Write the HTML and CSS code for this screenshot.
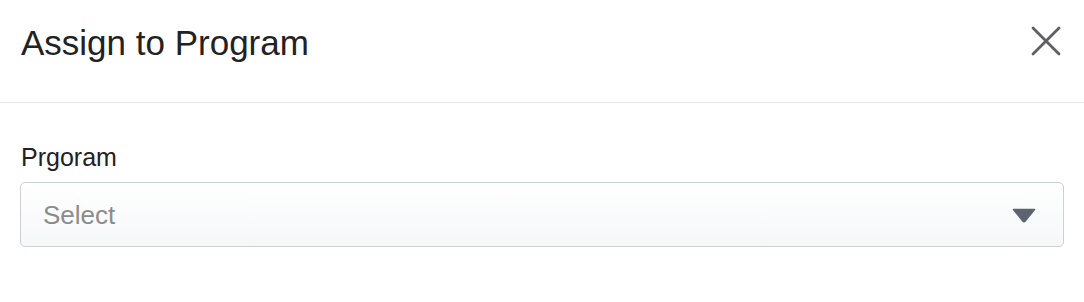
FILE: index.html
```html
<!DOCTYPE html>
<html>
<head>
<meta charset="utf-8">
<link rel="stylesheet" href="styles.css">
</head>
<body>
<div class="modal">
  <div class="modal-header">
    <h2 class="modal-title">Assign to Program</h2>
    <button class="close-btn" aria-label="Close">
      <svg width="30" height="30" viewBox="0 0 30 30">
        <path d="M2 2 L28 28 M28 2 L2 28" stroke="#5f5f63" stroke-width="2.8" stroke-linecap="round" fill="none"/>
      </svg>
    </button>
  </div>
  <div class="modal-body">
    <label class="field-label">Prgoram</label>
    <div class="select">
      <span class="select-placeholder">Select</span>
      <svg class="select-caret" width="24" height="15" viewBox="0 0 24 15">
        <path d="M1.5 1.5 H22.5 L13.2 13 Q12 14.2 10.8 13 Z" fill="#5b6570" stroke="#5b6570" stroke-width="1.5" stroke-linejoin="round"/>
      </svg>
    </div>
  </div>
</div>
</body>
</html>
```

FILE: styles.css
```css
html, body {
  margin: 0;
  padding: 0;
  background: #ffffff;
}
body {
  font-family: "Liberation Sans", Arial, sans-serif;
  color: #222222;
}
.modal {
  width: 1084px;
}
.modal-header {
  height: 103px;
  box-sizing: border-box;
  border-bottom: 1px solid #e6e6e6;
  display: flex;
  align-items: flex-start;
  justify-content: space-between;
  padding: 25px 23px 0 21px;
}
.modal-title {
  margin: 0;
  font-size: 35px;
  line-height: 35px;
  font-weight: 400;
  color: #222222;
}
.close-btn {
  border: 0;
  background: none;
  padding: 0;
  width: 30px;
  height: 30px;
  margin-top: 1px;
  display: flex;
}
.modal-body {
  padding: 42px 20px 0 20px;
}
.field-label {
  display: block;
  font-size: 25px;
  line-height: 25px;
  color: #222222;
  margin: 0 0 12px 1px;
}
.select {
  height: 65px;
  box-sizing: border-box;
  border: 1px solid #cdd0d4;
  border-radius: 5px;
  background: linear-gradient(#ffffff, #f6f7f9);
  display: flex;
  align-items: center;
  justify-content: space-between;
  padding: 2px 27px 0 22px;
}
.select-placeholder {
  font-size: 26px;
  color: #8c8c8c;
}
.select-caret {
  display: block;
  margin-top: -1px;
}
```
